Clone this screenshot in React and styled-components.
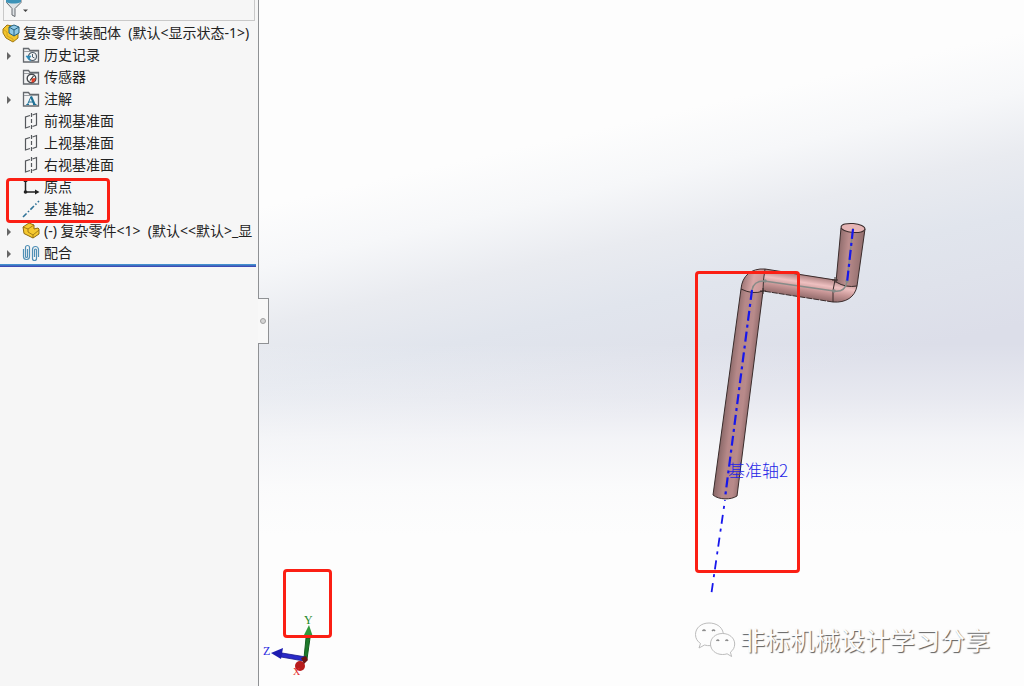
import React from "react";
import styled, { createGlobalStyle, css } from "styled-components";

const GlobalStyle = createGlobalStyle`
  * {
    box-sizing: border-box;
  }
  body {
    margin: 0;
    font-family: "Noto Sans", "Noto Sans CJK SC", sans-serif;
    font-size: 14px;
    color: #222;
  }
`;

const Page = styled.div`
  display: flex;
  min-height: 100vh;
  overflow: hidden;
`;

const Panel = styled.aside`
  position: relative;
  flex: 0 0 259px;
  min-width: 0;
  padding-right: 2px;
  background: #f6f6f6;
  border-right: 1px solid #8f9194;
`;

const FilterBar = styled.div`
  height: 21px;
  margin: 0 1px 1px 3px;
  border: 1px solid #c9c9c9;
  border-top: 0;
`;

const FilterButton = styled.button`
  display: flex;
  padding: 0 0 0 1px;
  border: 0;
  background: none;
`;

const Tree = styled.ul`
  margin: 0;
  padding: 0;
  list-style: none;
  &::after {
    content: "";
    display: block;
    height: 3px;
    background: linear-gradient(#45a0d4, #3c3cae);
  }
`;

const Row = styled.li`
  display: flex;
  align-items: center;
  height: 22px;
  padding-left: ${(props) => (props.$root ? "2px" : "5px")};
  gap: ${(props) => (props.$root ? "3px" : "4px")};
  line-height: 22px;
  white-space: pre;
  overflow: hidden;
  & > svg {
    flex: none;
  }
`;

const Expander = styled.button`
  flex: 0 0 13px;
  height: 22px;
  padding: 0;
  border: 0;
  background: none;
  text-align: left;
`;

const Spacer = styled.span`
  flex: 0 0 13px;
`;

const Handle = styled.button`
  position: absolute;
  z-index: 2;
  top: 298px;
  right: -11px;
  display: flex;
  align-items: center;
  justify-content: center;
  width: 11px;
  height: 46px;
  padding: 0;
  border: 1px solid #8f9194;
  border-left: 0;
  background: #f8f8f8;
`;

const Knob = styled.span`
  width: 6px;
  height: 6px;
  border: 1px solid #a0a0a0;
  border-radius: 50%;
  background: #d4d4d4;
`;

const Viewport = styled.main`
  position: relative;
  flex: 1;
  min-width: 0;
  overflow: hidden;
  background:
    linear-gradient(
      180deg,
      rgba(253, 253, 253, 0) 50%,
      rgba(253, 253, 253, 0.35) 58%,
      rgba(253, 253, 253, 0.7) 64%,
      rgba(253, 253, 253, 0.92) 71%,
      #fdfdfd 78%
    ),
    linear-gradient(
      167deg,
      #fdfdfd 0%,
      #fdfdfd 24%,
      #f6f7f9 31%,
      #e9ebf0 38%,
      #e1e5ed 45%,
      #dfe2eb 51%,
      #dcdee9 58%,
      #dcdee9 100%
    );
`;

const Mark = styled.div`
  position: absolute;
  z-index: 1;
  border: 3px solid #fb1f14;
  border-radius: 4px;
  pointer-events: none;
  ${(props) =>
    props.$kind === "tree" &&
    css`
      top: 178px;
      left: 6px;
      width: 104px;
      height: 45px;
    `}
  ${(props) =>
    props.$kind === "axis" &&
    css`
      top: 271px;
      left: 436px;
      width: 105px;
      height: 302px;
    `}
  ${(props) =>
    props.$kind === "triad" &&
    css`
      bottom: 48px;
      left: 24px;
      width: 49px;
      height: 69px;
    `}
`;

const Model = styled.svg`
  position: absolute;
  top: 210px;
  left: 431px;
`;

const AxisLabel = styled.span`
  position: absolute;
  top: 458px;
  left: 469px;
  font-family: "Noto Sans CJK SC", sans-serif;
  font-size: 17px;
  font-weight: 300;
  line-height: 24px;
  color: #2424e6;
`;

const Triad = styled.svg`
  position: absolute;
  bottom: 6px;
  left: 1px;
`;

const Watermark = styled.div`
  position: absolute;
  right: 34px;
  bottom: 28px;
  display: flex;
  align-items: center;
  gap: 4px;
  font-family: "Noto Sans CJK SC", sans-serif;
  font-size: 25px;
  line-height: 38px;
  color: #fcfcfc;
  text-shadow: 1px 1px 1px #5c5c5c;
`;

const Folder = ({ children }) => (
  <svg width="18" height="18" viewBox="0 0 18 18" fill="none">
    <path d="M1.500 16V2.500h5l1.500 2H16.500V16z" fill="#f2f3f4" stroke="#65696e" strokeWidth="1.300" />
    <path d="M2 5.500h14" stroke="#9a9da1" />
    {children}
  </svg>
);

const AssemblyIcon = () => (
  <svg width="18" height="20" viewBox="0 0 18 20" strokeLinejoin="round">
    <path d="M1 6l4-4 5 1v6l2 3 4-2v5l-5 4-7-4-3-5z" fill="#f3c52c" stroke="#9c7614" />
    <path d="M1 6l4 3v4l6 3v3" fill="none" stroke="#c99b1c" strokeWidth=".8" />
    <path d="M7 4l5-2 5 2v6l-5 3-5-3z" fill="#8fc9e6" stroke="#25617f" />
    <path d="M7 4l5 3 5-3M12 7v6" fill="none" stroke="#25617f" />
  </svg>
);

const HistoryIcon = () => (
  <Folder>
    <circle cx="10.500" cy="10.500" r="4" stroke="#4d5c68" strokeWidth="1.200" />
    <path d="M10.500 8v3l2 1" stroke="#4d5c68" />
    <path d="M4 10h5l-2.500 3.500zM6.500 12c0 1.500 1 2.500 2.500 3" fill="#2c8ab8" stroke="#2c8ab8" strokeWidth=".6" />
  </Folder>
);

const SensorIcon = () => (
  <Folder>
    <circle cx="9.500" cy="10.500" r="4.300" fill="#fff" stroke="#45484c" strokeWidth="1.400" />
    <path d="M9.500 10.500l4-.5a4 4 0 0 1-4 4.500z" fill="#e0402a" />
    <path d="M8 12.500l3.500-4.500" stroke="#333" strokeWidth="1.200" />
  </Folder>
);

const NoteIcon = () => (
  <Folder>
    <path d="M5.500 14.500L9 6.500M6.800 12h4.600M4.300 14.500h2.800M11 14.500h3.500" stroke="#1f7196" />
    <path d="M9 6.500l3.500 8" stroke="#1f7196" strokeWidth="2.200" />
  </Folder>
);

const PlaneIcon = () => (
  <svg width="18" height="18" viewBox="0 0 18 18" fill="none" stroke="#55585c" strokeWidth="1.200">
    <path d="M8 3.500l-4.500 1.500v11l4.500-1.500M10.500 3l4-1.500v11.500l-4 1.500" />
    <path d="M9.500 1v16" strokeDasharray="4 2" />
  </svg>
);

const OriginIcon = () => (
  <svg width="18" height="18" viewBox="0 0 18 18" fill="#222">
    <path d="M3.500 2v12H14" fill="none" stroke="#222" strokeWidth="1.500" />
    <path d="M1.500 4L3.500 0l2 4zM13 11.500l4.500 2.500-4.500 2.500z" />
    <circle cx="3.500" cy="14" r="1.800" />
  </svg>
);

const AxisIcon = () => (
  <svg width="18" height="18" viewBox="0 0 18 18">
    <path d="M1 17L17 1" stroke="#2f7398" strokeWidth="1.600" strokeDasharray="5 2 1.500 2" />
  </svg>
);

const PartIcon = () => (
  <svg width="18" height="18" viewBox="0 0 18 18" stroke="#8f6b10" strokeLinejoin="round">
    <path d="M1 5l6-4 5 2v4l4-1 1 1v5l-6 4-9-4.500z" fill="#f6c92f" />
    <path d="M1 5l5 2v3l5 3 6-5M6 7l6-4M11 13v3" fill="none" strokeWidth=".8" />
  </svg>
);

const MatesIcon = () => (
  <svg width="18" height="18" viewBox="0 0 18 18" fill="none" stroke="#4f8fb5" strokeWidth="1.200">
    <path d="M1.500 5v7.500a3 3 0 0 0 6 0V3.500a2 2 0 0 0-4 0v9a1 1 0 0 0 2 0V5" />
    <path d="M16.500 13V5.500a3 3 0 0 0-6 0v9a2 2 0 0 0 4 0V6a1 1 0 0 0-2 0v7" />
  </svg>
);

const FilterIcon = () => (
  <svg width="24" height="18" viewBox="0 0 24 18">
    <path d="M1.500 0v2.500l5.500 6v6.500l3 1.500V8.500l6-6V0z" fill="#dfe3e6" stroke="#666b70" />
    <path d="M1 0h15v2c-4 2-11 2-15 0z" fill="#3d93b8" />
    <path d="M18 9.500h5l-2.500 2.500z" fill="#444" />
  </svg>
);

const WechatIcon = () => (
  <svg width="42" height="38" viewBox="0 0 42 38">
    <g fill="#fdfdfd" stroke="#b4b4b4" strokeWidth=".9">
      <path d="M15 3C7 3 1.500 8 1.500 14.500c0 4 2 7 5 9L5 28l5.500-3c2 .6 4 .8 6 .6C28 25 30 18 29 12 27.500 6.500 22 3 15 3z" />
      <path d="M28.500 13.500c-7 0-12 4.600-12 10.500s5 10.500 12 10.500c1.700 0 3.200-.2 4.600-.7l4.500 2.700-1.200-4.300c2.700-2 4.300-4.800 4.300-8.200 0-5.900-5.200-10.500-12.200-10.500z" />
    </g>
    <path d="M8.500 11q1.500-2 3 0M18 11q1.500-2 3 0M22.500 21q1.300-2 2.600 0M31.500 21q1.300-2 2.600 0" fill="none" stroke="#888" strokeWidth="1.300" />
  </svg>
);

const treeData = [
  { id: 1, title: "历史记录", icon: HistoryIcon, open: true },
  { id: 2, title: "传感器", icon: SensorIcon },
  { id: 3, title: "注解", icon: NoteIcon, open: true },
  { id: 4, title: "前视基准面", icon: PlaneIcon },
  { id: 5, title: "上视基准面", icon: PlaneIcon },
  { id: 6, title: "右视基准面", icon: PlaneIcon },
  { id: 7, title: "原点", icon: OriginIcon },
  { id: 8, title: "基准轴2", icon: AxisIcon },
  { id: 9, title: "(-) 复杂零件<1>  (默认<<默认>_显", icon: PartIcon, open: true },
  { id: 10, title: "配合", icon: MatesIcon, open: true },
];

// drawn in window coordinates, the view box starts at (690, 210)
const CrankModel = () => (
  <Model width="190" height="395" viewBox="690 210 190 395" fill="none">
    <defs>
      <linearGradient id="leg" gradientUnits="userSpaceOnUse" x1="727" y1="390" x2="752" y2="393">
        <stop offset="0" stopColor="#8f6c6c" />
        <stop offset=".3" stopColor="#b58888" />
        <stop offset=".7" stopColor="#b88a8a" />
        <stop offset="1" stopColor="#8f6a6a" />
      </linearGradient>
      <linearGradient id="arm" gradientUnits="userSpaceOnUse" x1="801" y1="274" x2="797" y2="300">
        <stop offset="0" stopColor="#a87c7c" />
        <stop offset=".3" stopColor="#eec0c0" />
        <stop offset=".55" stopColor="#c89696" />
        <stop offset="1" stopColor="#7c5a5a" />
      </linearGradient>
      <linearGradient id="grip" gradientUnits="userSpaceOnUse" x1="838" y1="255" x2="862" y2="257">
        <stop offset="0" stopColor="#8f6c6c" />
        <stop offset=".4" stopColor="#bb8d8d" />
        <stop offset="1" stopColor="#94706f" />
      </linearGradient>
      <linearGradient id="bend" gradientUnits="userSpaceOnUse" x1="742" y1="280" x2="764" y2="284">
        <stop offset="0" stopColor="#9c7474" />
        <stop offset=".5" stopColor="#d8a6a6" />
        <stop offset="1" stopColor="#c89696" />
      </linearGradient>
    </defs>
    <path d="M765 269l72 11 20 6c-2 11-11 17-24 16l-70-11z" fill="url(#arm)" />
    <g stroke="#3a2c2c" strokeWidth="1">
      <path d="M841 228l-5 54q10 6 21 4l8-57z" fill="url(#grip)" />
      <path d="M765 269l70 11" />
      <path d="M833 302l-70-11" strokeDasharray="6 1" />
      <path d="M857 286c-2 11-11 17-24 16M835 280q-3 10-2 22" />
      <path d="M741 289l-28 206c6 5 18 5 24 1l26-205z" fill="url(#leg)" />
      <path d="M741 289c1-13 10-21 24-20q-2 11-2 22-10 4-22-2z" fill="url(#bend)" />
      <ellipse cx="853" cy="228" rx="12" ry="4.500" fill="#e5b4b4" transform="rotate(5 853 228)" />
      <path d="M760 291h6M763 288v6M832 280h6M835 277v6" />
    </g>
    <path d="M752 290c1-6 5-9 12-9l70 10c8 1 12-2 13-10l6-53" stroke="#868b88" strokeWidth="1.400" />
    <circle cx="765" cy="281" r="1.800" fill="#868b88" />
    <circle cx="834" cy="291" r="1.800" fill="#868b88" />
    <circle cx="847" cy="281" r="1.800" fill="#868b88" />
    <path d="M853 229l-6 54M752 290l-27 208" stroke="#1717ec" strokeWidth="2.200" strokeDasharray="10 4 3 4" />
    <path d="M725 500l-14 96" stroke="#1717ec" strokeWidth="1.800" strokeDasharray="3 6 9 5" strokeDashoffset="-6" />
  </Model>
);

const TriadAxes = () => (
  <Triad width="70" height="66" viewBox="260 614 70 66">
    <path d="M304 658l2-20h4l-3 21z" fill="#1d7a2a" stroke="#155c1f" />
    <path d="M303 637l6-12 4 12q-5 2-10 0z" fill="#2f9a3b" />
    <path d="M306 657l-24-4-1 4 23 4z" fill="#2a2ac8" stroke="#16168a" strokeWidth=".8" />
    <path d="M271 653l12-5-2 11z" fill="#1c1cb0" />
    <circle cx="300" cy="666" r="5" fill="#b81c1c" />
    <path d="M301 658l5-2 2 4-4 4z" fill="#6e1212" />
    <g fontFamily="Liberation Serif" fontSize="12">
      <text x="304" y="624" fill="#1d8a2a">Y</text>
      <text x="263" y="655" fill="#2a2ae0">Z</text>
      <text x="293" y="675" fill="#e42a2a" fontSize="10">X</text>
    </g>
  </Triad>
);

const App = () => {
  return (
    <>
      <GlobalStyle />
      <Page>
        <Panel>
          <FilterBar>
            <FilterButton aria-label="Filter">
              <FilterIcon />
            </FilterButton>
          </FilterBar>
          <Tree>
            <Row $root>
              <AssemblyIcon />
              <span>复杂零件装配体  (默认&lt;显示状态-1&gt;)</span>
            </Row>
            {treeData.map((item) => {
              const Icon = item.icon;
              return (
                <Row key={item.id}>
                  {item.open ? (
                    <Expander aria-label={item.title}>
                      <svg width="8" height="8" viewBox="0 0 8 8">
                        <path d="M2 0l4 4-4 4z" fill="#666" />
                      </svg>
                    </Expander>
                  ) : (
                    <Spacer />
                  )}
                  <Icon />
                  <span>{item.title}</span>
                </Row>
              );
            })}
          </Tree>
          <Mark $kind="tree" />
          <Handle aria-label="Collapse">
            <Knob />
          </Handle>
        </Panel>
        <Viewport>
          <CrankModel />
          <AxisLabel>基准轴2</AxisLabel>
          <TriadAxes />
          <Mark $kind="axis" />
          <Mark $kind="triad" />
          <Watermark>
            <WechatIcon />
            <span>非标机械设计学习分享</span>
          </Watermark>
        </Viewport>
      </Page>
    </>
  );
};

export default App;
